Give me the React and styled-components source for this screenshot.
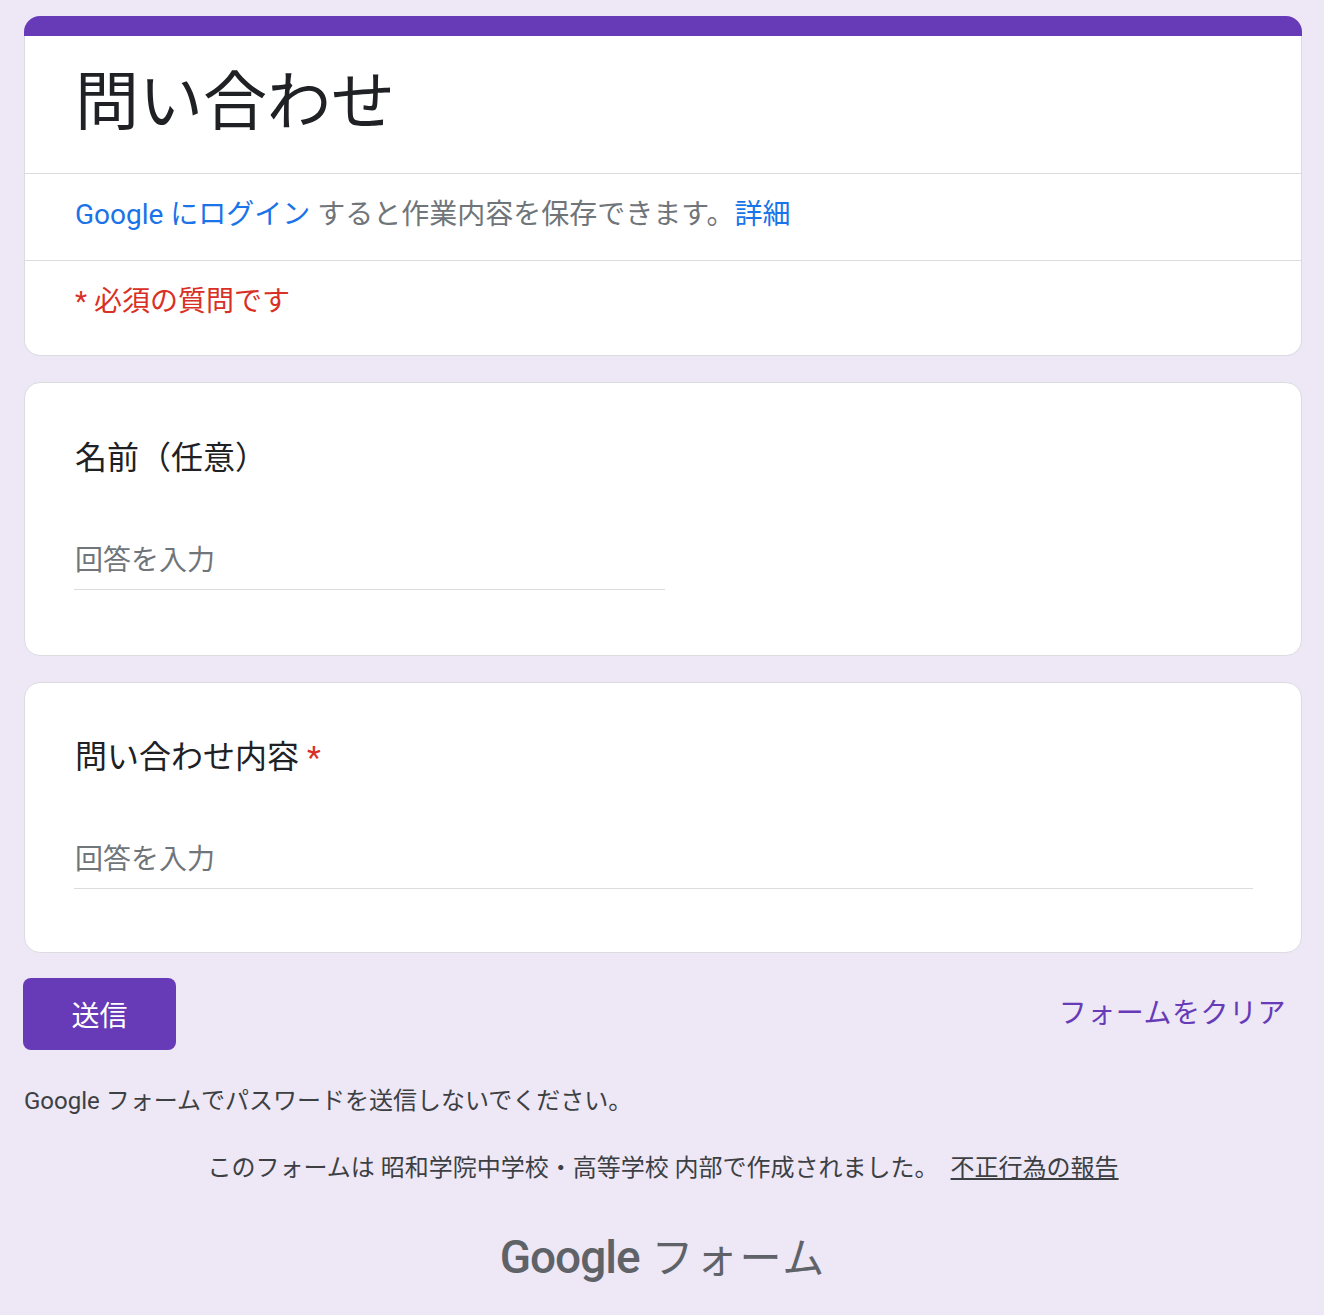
import React from 'react'
import styled, { createGlobalStyle } from 'styled-components'

const GlobalStyle = createGlobalStyle`
  html, body {
    margin: 0;
    padding: 0;
    background: #ede7f6;
  }
  body {
    font-family: Roboto, "Noto Sans CJK JP", sans-serif;
    color: #202124;
  }
`

const Page = styled.div`
  padding: 16px 22px 0 24px;
  min-height: 1299px;
`

const Card = styled.div`
  background: #fff;
  border: 1px solid #dadce0;
  border-radius: 16px;
  margin-bottom: 26px;
`

const HeaderCard = styled(Card)`
  border-top: none;
`

const Band = styled.div`
  height: 20px;
  margin: 0 -1px;
  background: #673ab7;
  border-radius: 16px 16px 0 0;
`

const Section = styled.div`
  padding: ${p => p.$pad};
  border-top: ${p => (p.$divider ? '1px solid #dadce0' : 'none')};
`

const Title = styled.h1`
  margin: 0;
  font-size: 64px;
  line-height: 80px;
  font-weight: 400;
  color: #202124;
`

const InfoLine = styled.div`
  font-size: 28px;
  line-height: 40px;
  color: #70757a;
`

const Link = styled.span`
  color: #1a73e8;
`

const Required = styled.div`
  font-size: 28px;
  line-height: 40px;
  color: #d93025;
`

const QuestionCard = styled(Card)`
  padding: ${p => p.$top}px 48px ${p => p.$bottom}px 49px;
`

const Label = styled.div`
  font-size: 32px;
  line-height: 48px;
  color: #202124;
  margin-left: 1px;
`

const Star = styled.span`
  color: #d93025;
  margin-left: 8px;
`

const Input = styled.div`
  margin-top: ${p => p.$gap}px;
  width: ${p => p.$width};
  padding: 0 0 8px 1px;
  border-bottom: 1px solid #dadce0;
  font-size: 28px;
  line-height: 40px;
  color: #70757a;
`

const Actions = styled.div`
  display: flex;
  align-items: center;
  justify-content: space-between;
  margin-top: -1px;
`

const SubmitButton = styled.button`
  width: 153px;
  height: 72px;
  margin-left: -1px;
  border: none;
  border-radius: 8px;
  background: #673ab7;
  color: #fff;
  font-family: Roboto, "Noto Sans CJK JP", sans-serif;
  font-size: 28px;
  font-weight: 400;
  cursor: pointer;
`

const ClearButton = styled.button`
  height: 72px;
  padding: 0 16px 6px;
  border: none;
  background: transparent;
  color: #673ab7;
  font-family: Roboto, "Noto Sans CJK JP", sans-serif;
  font-size: 28px;
  letter-spacing: 0.5px;
  cursor: pointer;
`

const Note = styled.div`
  margin-top: 35px;
  font-size: 24px;
  line-height: 32px;
  color: #3c4043;
`

const Footer = styled.div`
  margin-top: 35px;
  text-align: center;
  font-size: 24px;
  line-height: 32px;
  color: #3c4043;
`

const FooterLink = styled.a`
  margin-left: 12px;
  color: #3c4043;
  text-decoration: underline;
`

const Logo = styled.div`
  margin-top: 40px;
  display: flex;
  justify-content: center;
  align-items: baseline;
  gap: 12px;
  color: #5f6368;
`

const LogoWord = styled.span`
  font-family: Roboto, sans-serif;
  font-size: 46px;
  font-weight: 500;
  letter-spacing: -1px;
`

const LogoProduct = styled.span`
  font-size: 42px;
  letter-spacing: 2px;
`

export default function App() {
  return (
    <>
      <GlobalStyle />
      <Page>
        <HeaderCard>
          <Band />
          <Section $pad="27px 48px 30px 50px">
            <Title>問い合わせ</Title>
          </Section>
          <Section $divider $pad="21px 48px 25px 50px">
            <InfoLine>
              <Link>Google にログイン</Link> すると作業内容を保存できます。<Link>詳細</Link>
            </InfoLine>
          </Section>
          <Section $divider $pad="21px 48px 33px 50px">
            <Required>* 必須の質問です</Required>
          </Section>
        </HeaderCard>

        <QuestionCard $top={51} $bottom={65}>
          <Label>名前（任意）</Label>
          <Input $gap={59} $width="590px">回答を入力</Input>
        </QuestionCard>

        <QuestionCard $top={50} $bottom={63}>
          <Label>
            問い合わせ内容<Star>*</Star>
          </Label>
          <Input $gap={59} $width="auto">回答を入力</Input>
        </QuestionCard>

        <Actions>
          <SubmitButton>送信</SubmitButton>
          <ClearButton>フォームをクリア</ClearButton>
        </Actions>

        <Note>Google フォームでパスワードを送信しないでください。</Note>

        <Footer>
          このフォームは 昭和学院中学校・高等学校 内部で作成されました。
          <FooterLink>不正行為の報告</FooterLink>
        </Footer>

        <Logo>
          <LogoWord>Google</LogoWord>
          <LogoProduct>フォーム</LogoProduct>
        </Logo>
      </Page>
    </>
  )
}
